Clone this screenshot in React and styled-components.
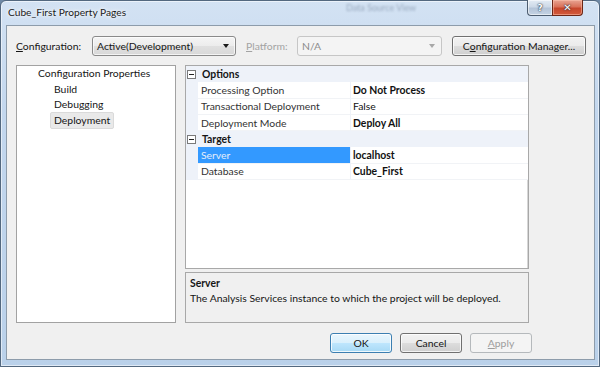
import React from 'react';
import styled, { createGlobalStyle, css } from 'styled-components';

const GlobalStyle = createGlobalStyle`
  html, body {
    margin: 0;
    padding: 0;
  }
  body {
    width: 600px;
    height: 367px;
    overflow: hidden;
    background: #6f89a6;
    font-family: Lato, 'Noto Sans', sans-serif;
    font-size: 10.4px;
    color: #151515;
  }
`;

const Window = styled.div`
  width: 600px;
  height: 367px;
  box-sizing: border-box;
  display: flex;
  flex-direction: column;
  padding: 0 4px 6px 5px;
  border: 1px solid #53687f;
  border-radius: 6px 6px 0 0;
  background: linear-gradient(180deg, #d3e2f3 0%, #c3d7ee 30%, #bad1ea 100%);
  box-shadow: inset 0 0 0 1px rgba(255, 255, 255, 0.55);
`;

const TitleBar = styled.div`
  position: relative;
  height: 24px;
  display: flex;
  align-items: flex-start;
  padding-left: 2px;
`;

const Title = styled.div`
  margin-top: 5px;
  font-size: 10.2px;
  color: #1b1b1b;
  text-shadow: 0 0 6px #fff, 0 0 3px #fff;
`;

const GhostTitle = styled.div`
  position: absolute;
  left: 340px;
  top: 1px;
  font-size: 9px;
  color: rgba(40, 60, 90, 0.35);
  filter: blur(0.8px);
`;

const CaptionButtons = styled.div`
  margin-left: auto;
  margin-right: 12px;
  margin-top: -1px;
  display: flex;
`;

const CaptionButton = styled.div`
  height: 16px;
  box-sizing: border-box;
  display: flex;
  align-items: center;
  justify-content: center;
  border: 1px solid #4d5d70;
  border-top: none;
  font-family: 'DejaVu Sans', sans-serif;
  font-weight: bold;
  color: #fff;
  text-shadow: 0 0 1px #1c2a3a, 0 0 2px #1c2a3a;
  ${(p) =>
    p.$close
      ? css`
          width: 31px;
          font-size: 10px;
          border-color: #6b2616;
          border-radius: 0 0 4px 0;
          background: linear-gradient(180deg, #e8a492 0%, #d9725a 45%, #c6462b 55%, #d25a3c 100%);
          box-shadow: inset 0 0 0 1px rgba(255, 200, 180, 0.5);
        `
      : css`
          width: 25px;
          font-size: 9px;
          border-right: none;
          border-radius: 0 0 0 4px;
          background: linear-gradient(180deg, #e3ebf4 0%, #cdd9e7 45%, #b4c4d8 55%, #c4d3e4 100%);
          box-shadow: inset 0 0 0 1px rgba(255, 255, 255, 0.55);
        `}
`;

const Client = styled.div`
  flex: 1;
  border: 1px solid #8d9cab;
  background: #f0f0f0;
  padding: 10px 0 0 9px;
`;

const Body = styled.div`
  width: 516px;
  display: flex;
  flex-direction: column;
`;

const Toolbar = styled.div`
  width: 570px;
  height: 20px;
  display: flex;
  align-items: center;
`;

const Label = styled.span`
  width: ${(p) => p.$width}px;
  flex: none;
  color: ${(p) => (p.$disabled ? '#a3a3a3' : '#151515')};
  margin-left: ${(p) => p.$gap || 0}px;
  white-space: nowrap;
`;

const Combo = styled.div`
  width: ${(p) => p.$width}px;
  height: 20px;
  box-sizing: border-box;
  flex: none;
  display: flex;
  align-items: center;
  padding: 0 6px 0 4px;
  border-radius: 3px;
  ${(p) =>
    p.$disabled
      ? css`
          border: 1px solid #c6c6c6;
          background: #f4f4f4;
          color: #8c8c8c;
        `
      : css`
          border: 1px solid #8a8a8a;
          background: linear-gradient(180deg, #f5f5f5 0%, #ececec 50%, #e0e0e0 51%, #d8d8d8 100%);
          box-shadow: inset 0 0 0 1px rgba(255, 255, 255, 0.7);
        `}
`;

const ComboText = styled.span`
  flex: 1;
  white-space: nowrap;
`;

const Arrow = styled.span`
  width: 0;
  height: 0;
  border-left: 3.5px solid transparent;
  border-right: 3.5px solid transparent;
  border-top: 4px solid ${(p) => (p.$disabled ? '#a8a8a8' : '#1a1a1a')};
`;

const Button = styled.div`
  width: ${(p) => p.$width || 62}px;
  height: 20px;
  box-sizing: border-box;
  flex: none;
  display: flex;
  align-items: center;
  justify-content: center;
  border-radius: 3px;
  margin-left: ${(p) => p.$gap || 0}px;
  white-space: nowrap;
  border: 1px solid #707070;
  background: linear-gradient(180deg, #f2f2f2 0%, #ebebeb 50%, #dddddd 51%, #cfcfcf 100%);
  box-shadow: inset 0 0 0 1px rgba(255, 255, 255, 0.75);
  ${(p) =>
    p.$default &&
    css`
      border-color: #3c7fb1;
      background: linear-gradient(180deg, #eaf6fd 0%, #d9f0fc 50%, #bee6fd 51%, #a7d9f5 100%);
      box-shadow: inset 0 0 0 1px rgba(255, 255, 255, 0.8);
    `}
  ${(p) =>
    p.$disabled &&
    css`
      border-color: #b5b9bc;
      background: #f4f4f4;
      color: #9c9c9c;
      box-shadow: none;
    `}
`;

const Main = styled.div`
  margin-top: 9px;
  height: 258px;
  display: flex;
  gap: 9px;
`;

const Tree = styled.div`
  width: 160px;
  flex: none;
  box-sizing: border-box;
  border: 1px solid #a2a2a2;
  background: #fff;
`;

const TreeRow = styled.div`
  height: 15.5px;
  display: flex;
  align-items: center;
  padding-left: ${(p) => 17 + p.$level * 16}px;
`;

const TreeText = styled.span`
  padding: 0 3px;
  height: 15px;
  line-height: 15px;
  border: 1px solid transparent;
  border-radius: 2px;
  ${(p) =>
    p.$selected &&
    css`
      background: #e9e9e9;
      border-color: #dadada;
    `}
`;

const RightColumn = styled.div`
  width: 344px;
  flex: none;
  display: flex;
  flex-direction: column;
  gap: 3px;
`;

const Grid = styled.div`
  flex: 1;
  border: 1px solid #a8a8a8;
  background: #fff;
  box-shadow: inset -1px 0 0 #d6d6d6;
`;

const CategoryRow = styled.div`
  height: 16.3px;
  display: flex;
  align-items: center;
  background: #eef2f9;
  font-weight: bold;
`;

const ToggleBox = styled.span`
  width: 9px;
  height: 9px;
  box-sizing: border-box;
  margin: 0 6px 0 1px;
  border: 1px solid #7a7a7a;
  background: #fff;
  display: flex;
  align-items: center;
  justify-content: center;
  &::after {
    content: '';
    width: 5px;
    height: 1px;
    background: #222;
  }
`;

const PropRow = styled.div`
  height: 16.3px;
  display: flex;
  background: #eef2f9;
`;

const NameCell = styled.div`
  margin-left: 12px;
  width: 152px;
  flex: none;
  display: flex;
  align-items: center;
  padding-left: 3px;
  box-sizing: border-box;
  border-bottom: 1px solid #f1f3f6;
  color: ${(p) => (p.$selected ? '#e4eefb' : '#333')};
  background: ${(p) => (p.$selected ? '#3399ff' : '#fff')};
`;

const ValueCell = styled.div`
  flex: 1;
  display: flex;
  align-items: center;
  padding-left: 2px;
  margin-left: 1px;
  border-bottom: 1px solid #f1f3f6;
  background: #fff;
  font-weight: ${(p) => (p.$bold ? 'bold' : 'normal')};
  color: #111;
`;

const Description = styled.div`
  height: 51px;
  box-sizing: border-box;
  border: 1px solid #a8a8a8;
  background: #f0f0f0;
  padding: 3px 4px;
  line-height: 14.5px;
`;

const DescTitle = styled.div`
  font-weight: bold;
`;

const Footer = styled.div`
  margin-top: 10px;
  display: flex;
  justify-content: flex-end;
  gap: 8px;
`;

const properties = [
  {
    category: 'Options',
    items: [
      { name: 'Processing Option', value: 'Do Not Process', bold: true },
      { name: 'Transactional Deployment', value: 'False' },
      { name: 'Deployment Mode', value: 'Deploy All', bold: true },
    ],
  },
  {
    category: 'Target',
    items: [
      { name: 'Server', value: 'localhost', bold: true, selected: true },
      { name: 'Database', value: 'Cube_First', bold: true },
    ],
  },
];

const treeItems = [
  { label: 'Configuration Properties', level: 0 },
  { label: 'Build', level: 1 },
  { label: 'Debugging', level: 1 },
  { label: 'Deployment', level: 1, selected: true },
];

export default function App() {
  return (
    <>
      <GlobalStyle />
      <Window>
        <TitleBar>
          <Title>Cube_First Property Pages</Title>
          <GhostTitle>Data Source View</GhostTitle>
          <CaptionButtons>
            <CaptionButton>?</CaptionButton>
            <CaptionButton $close>✕</CaptionButton>
          </CaptionButtons>
        </TitleBar>
        <Client>
          <Body>
            <Toolbar>
              <Label $width={76}>
                <u>C</u>onfiguration:
              </Label>
              <Combo $width={144}>
                <ComboText>Active(Development)</ComboText>
                <Arrow />
              </Combo>
              <Label $width={51} $gap={10} $disabled>
                <u>P</u>latform:
              </Label>
              <Combo $width={145} $disabled>
                <ComboText>N/A</ComboText>
                <Arrow $disabled />
              </Combo>
              <Button $width={134} $gap={10}>
                C<u>o</u>nfiguration Manager...
              </Button>
            </Toolbar>
            <Main>
              <Tree>
                {treeItems.map((item) => (
                  <TreeRow key={item.label} $level={item.level}>
                    <TreeText $selected={item.selected}>{item.label}</TreeText>
                  </TreeRow>
                ))}
              </Tree>
              <RightColumn>
                <Grid>
                  {properties.map((group) => (
                    <React.Fragment key={group.category}>
                      <CategoryRow>
                        <ToggleBox />
                        {group.category}
                      </CategoryRow>
                      {group.items.map((item) => (
                        <PropRow key={item.name}>
                          <NameCell $selected={item.selected}>{item.name}</NameCell>
                          <ValueCell $bold={item.bold}>{item.value}</ValueCell>
                        </PropRow>
                      ))}
                    </React.Fragment>
                  ))}
                </Grid>
                <Description>
                  <DescTitle>Server</DescTitle>
                  <div>The Analysis Services instance to which the project will be deployed.</div>
                </Description>
              </RightColumn>
            </Main>
            <Footer>
              <Button $default>OK</Button>
              <Button>Cancel</Button>
              <Button $disabled>
                <u>A</u>pply
              </Button>
            </Footer>
          </Body>
        </Client>
      </Window>
    </>
  );
}
